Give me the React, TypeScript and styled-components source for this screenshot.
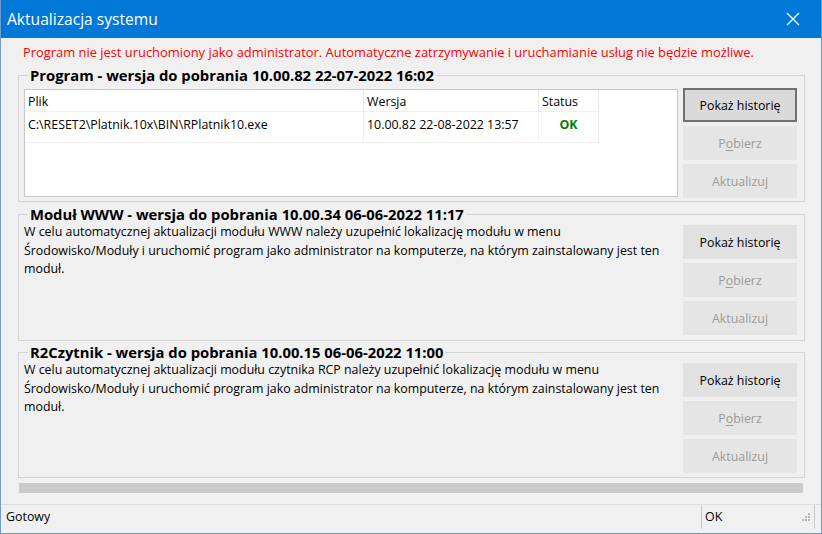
import React from "react";
import styled, { createGlobalStyle } from "styled-components";

const Global = createGlobalStyle`
  html, body { margin: 0; padding: 0; background: #f0f0f0; }
  body { font-family: "Open Sans", "Noto Sans", sans-serif; }
  * { box-sizing: border-box; }
`;

const Window = styled.div`
  width: 822px;
  height: 534px;
  display: flex;
  flex-direction: column;
  background: #f0f0f0;
  border: 1px solid #6f9bd1;
  border-top: none;
  overflow: hidden;
`;

const TitleBar = styled.div`
  height: 38px;
  flex: none;
  background: #0078d7;
  display: flex;
  align-items: center;
  justify-content: space-between;
  padding-left: 6px;
  color: #fff;
  font-size: 15.6px;
  font-weight: 400;
`;

const CloseButton = styled.div`
  width: 46px;
  height: 38px;
  display: flex;
  align-items: center;
  justify-content: center;
  margin-right: 5px;
`;

const Body = styled.div`
  flex: 1;
  display: flex;
  flex-direction: column;
  padding: 0 16px 0 17px;
`;

const Warning = styled.div`
  color: #f00;
  font-size: 12.9px;
  line-height: 18px;
  margin: 5px 0 0 5px;
  height: 24px;
  white-space: nowrap;
`;

const Group = styled.fieldset<{ $h: number; $mb: number }>`
  margin: 0 0 ${(p) => p.$mb}px 0;
  padding: 0 7px 3px 5px;
  border: 1px solid #d5d5d5;
  height: ${(p) => p.$h}px;
  min-width: 0;
`;

const Legend = styled.legend`
  margin-left: 4px;
  padding: 0 2px;
  font-size: 14.8px;
  font-weight: 700;
  line-height: 16px;
  color: #000;
`;

const GroupInner = styled.div<{ $top: number }>`
  display: flex;
  justify-content: space-between;
  padding-top: ${(p) => p.$top}px;
`;

const ButtonColumn = styled.div<{ $top: number }>`
  width: 114px;
  flex: none;
  display: flex;
  flex-direction: column;
  gap: 4px;
  padding-top: ${(p) => p.$top}px;
`;

const Button = styled.div<{ $kind: "default" | "normal" | "disabled" }>`
  height: 34px;
  display: flex;
  align-items: center;
  justify-content: center;
  font-size: 12.4px;
  background: ${(p) => (p.$kind === "default" ? "#dadada" : p.$kind === "normal" ? "#e1e1e1" : "#e5e5e5")};
  border: ${(p) => (p.$kind === "default" ? "2px solid #707070" : "1px solid transparent")};
  color: ${(p) => (p.$kind === "disabled" ? "#9b9b9b" : "#000")};
  u { text-decoration-thickness: 1px; text-underline-offset: 2px; }
`;

const ListView = styled.div`
  width: 654px;
  height: 108px;
  background: #fff;
  border: 1px solid #c8c8c8;
  margin-top: 1px;
`;

const Grid = styled.div`
  display: grid;
  grid-template-columns: 339px 175px 60px;
`;

const HeadCell = styled.div`
  height: 22px;
  line-height: 23px;
  font-size: 12.4px;
  padding-left: 3px;
  border-right: 1px solid #eaeaea;
  border-bottom: 1px solid #f0f0f0;
`;

const Cell = styled.div<{ $center?: boolean; $ok?: boolean }>`
  height: 31px;
  line-height: 25px;
  font-size: 12.4px;
  padding-left: ${(p) => (p.$center ? 0 : 3)}px;
  text-align: ${(p) => (p.$center ? "center" : "left")};
  border-right: 1px solid #f0f0f0;
  border-bottom: 1px solid #f0f0f0;
  color: ${(p) => (p.$ok ? "#008000" : "#000")};
  font-weight: ${(p) => (p.$ok ? 700 : 400)};
  white-space: nowrap;
`;

const Text = styled.div`
  font-size: 12.4px;
  line-height: 18.5px;
  white-space: nowrap;
  padding-top: 1px;
`;

const Progress = styled.div`
  height: 10px;
  background: #cbcbcb;
  margin: 1px 2px 0 1px;
`;

const StatusBar = styled.div`
  margin-top: 11px;
  border-top: 1px solid #dcdcdc;
  height: 30px;
  display: flex;
  align-items: center;
  font-size: 12.4px;
  padding-bottom: 6px;
`;

const StatusMain = styled.div`
  flex: 1;
  padding-left: 5px;
`;

const StatusPanel = styled.div`
  width: 114px;
  height: 24px;
  display: flex;
  align-items: center;
  justify-content: space-between;
  border-left: 1px solid #c8c8c8;
  border-right: 1px solid #c8c8c8;
  padding-left: 3px;
  padding-right: 4px;
  margin-right: 6px;
`;

const Modules = [
  {
    title: "Moduł WWW - wersja do pobrania 10.00.34 06-06-2022 11:17",
    h: 135,
    mb: 3,
    btnTop: 3,
    lines: [
      "W celu automatycznej aktualizacji modułu WWW należy uzupełnić lokalizację modułu w menu",
      "Środowisko/Moduły i uruchomić program jako administrator na komputerze, na którym zainstalowany jest ten",
      "moduł.",
    ],
  },
  {
    title: "R2Czytnik - wersja do pobrania 10.00.15 06-06-2022 11:00",
    h: 134,
    mb: 4,
    btnTop: 3,
    lines: [
      "W celu automatycznej aktualizacji modułu czytnika RCP należy uzupełnić lokalizację modułu w menu",
      "Środowisko/Moduły i uruchomić program jako administrator na komputerze, na którym zainstalowany jest ten",
      "moduł.",
    ],
  },
];

const Buttons = ({ first, top }: { first: "default" | "normal"; top: number }) => (
  <ButtonColumn $top={top}>
    <Button $kind={first}>Pokaż historię</Button>
    <Button $kind="disabled">
      P<u>o</u>bierz
    </Button>
    <Button $kind="disabled">Aktualizuj</Button>
  </ButtonColumn>
);

const Grip = () => (
  <svg width="8" height="8" viewBox="0 0 8 8">
    {[
      [6, 0],
      [6, 3],
      [3, 3],
      [6, 6],
      [3, 6],
      [0, 6],
    ].map(([x, y], i) => (
      <rect key={i} x={x} y={y} width="2" height="2" fill="#b4b4b4" />
    ))}
  </svg>
);

export default function App() {
  return (
    <>
      <Global />
      <Window>
        <TitleBar>
          <span>Aktualizacja systemu</span>
          <CloseButton>
            <svg width="14" height="14" viewBox="0 0 14 14">
              <path d="M1 1 L13 13 M13 1 L1 13" stroke="#fff" strokeWidth="1.3" />
            </svg>
          </CloseButton>
        </TitleBar>
        <Body>
          <Warning>
            Program nie jest uruchomiony jako administrator. Automatyczne zatrzymywanie i uruchamianie usług nie będzie możliwe.
          </Warning>
          <Group $h={135} $mb={4}>
            <Legend>Program - wersja do pobrania 10.00.82 22-07-2022 16:02</Legend>
            <GroupInner $top={5}>
              <ListView>
                <Grid>
                  <HeadCell>Plik</HeadCell>
                  <HeadCell>Wersja</HeadCell>
                  <HeadCell>Status</HeadCell>
                  <Cell>C:\RESET2\Platnik.10x\BIN\RPlatnik10.exe</Cell>
                  <Cell>10.00.82 22-08-2022 13:57</Cell>
                  <Cell $center $ok>
                    OK
                  </Cell>
                </Grid>
              </ListView>
              <Buttons first="default" top={0} />
            </GroupInner>
          </Group>
          {Modules.map((m) => (
            <Group $h={m.h} $mb={m.mb} key={m.title}>
              <Legend>{m.title}</Legend>
              <GroupInner $top={0}>
                <Text>
                  {m.lines.map((l) => (
                    <div key={l}>{l}</div>
                  ))}
                </Text>
                <Buttons first="normal" top={m.btnTop} />
              </GroupInner>
            </Group>
          ))}
          <Progress />
        </Body>
        <StatusBar>
          <StatusMain>Gotowy</StatusMain>
          <StatusPanel>
            <span>OK</span>
            <Grip />
          </StatusPanel>
        </StatusBar>
      </Window>
    </>
  );
}
